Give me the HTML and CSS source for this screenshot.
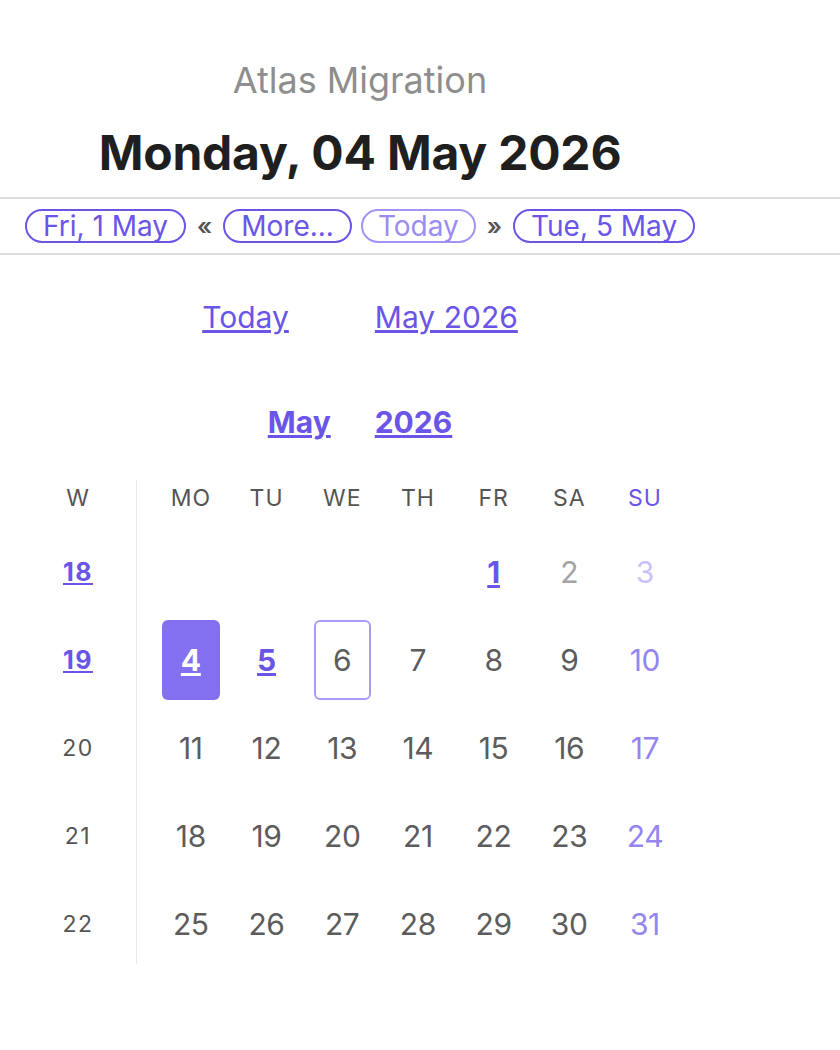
FILE: index.html
```html
<!DOCTYPE html>
<html lang="en">
<head>
<meta charset="utf-8">
<title>Atlas Migration</title>
<link rel="stylesheet" href="styles.css">
</head>
<body>
<header class="head">
  <div class="project">Atlas Migration</div>
  <h1 class="date">Monday, 04 May 2026</h1>
</header>
<nav class="daynav">
  <a class="pill" href="#">Fri, 1 May</a>
  <span class="arrow">«</span>
  <a class="pill" href="#">More...</a>
  <a class="pill pill-muted" href="#">Today</a>
  <span class="arrow">»</span>
  <a class="pill" href="#">Tue, 5 May</a>
</nav>
<div class="quick">
  <a href="#">Today</a>
  <a href="#">May 2026</a>
</div>
<div class="monthhead">
  <a href="#">May</a>
  <a href="#">2026</a>
</div>
<div class="cal">
  <div class="weeks">
    <div class="hcell">W</div>
    <div class="wk"><a href="#">18</a></div>
    <div class="wk"><a href="#">19</a></div>
    <div class="wk">20</div>
    <div class="wk">21</div>
    <div class="wk">22</div>
  </div>
  <div class="days">
    <div class="hcell">MO</div>
    <div class="hcell">TU</div>
    <div class="hcell">WE</div>
    <div class="hcell">TH</div>
    <div class="hcell">FR</div>
    <div class="hcell">SA</div>
    <div class="hcell sun">SU</div>

    <div class="d"></div>
    <div class="d"></div>
    <div class="d"></div>
    <div class="d"></div>
    <div class="d"><a class="link" href="#">1</a></div>
    <div class="d past">2</div>
    <div class="d pastsun">3</div>

    <div class="d"><a class="sel" href="#">4</a></div>
    <div class="d"><a class="link" href="#">5</a></div>
    <div class="d"><span class="today">6</span></div>
    <div class="d">7</div>
    <div class="d">8</div>
    <div class="d">9</div>
    <div class="d sunday">10</div>

    <div class="d">11</div>
    <div class="d">12</div>
    <div class="d">13</div>
    <div class="d">14</div>
    <div class="d">15</div>
    <div class="d">16</div>
    <div class="d sunday">17</div>

    <div class="d">18</div>
    <div class="d">19</div>
    <div class="d">20</div>
    <div class="d">21</div>
    <div class="d">22</div>
    <div class="d">23</div>
    <div class="d sunday">24</div>

    <div class="d">25</div>
    <div class="d">26</div>
    <div class="d">27</div>
    <div class="d">28</div>
    <div class="d">29</div>
    <div class="d">30</div>
    <div class="d sunday">31</div>
  </div>
</div>
</body>
</html>
```
FILE: styles.css
```css
* { box-sizing: border-box; }
html, body { margin: 0; padding: 0; background: #fff; }
body {
  font-family: Inter, "Noto Sans", "Liberation Sans", sans-serif;
  color: #5c5c5c;
  width: 840px;
}
a { color: #6a55e8; }

.head {
  width: 720px;
  text-align: center;
  padding-top: 60px;
}
.project {
  font-size: 36px;
  line-height: 40px;
  color: #8e8e8e;
}
.date {
  margin: 25px 0 0;
  font-size: 48px;
  line-height: 56px;
  font-weight: 700;
  color: #1f1f1f;
  letter-spacing: -0.2px;
  padding-bottom: 16px;
}

.daynav {
  border-top: 2px solid #dcdcdc;
  border-bottom: 2px solid #dcdcdc;
  padding: 10px 25px;
  display: flex;
  align-items: center;
  gap: 9px;
}
.pill {
  display: inline-block;
  height: 34px;
  line-height: 30px;
  padding: 0 16px;
  border: 2px solid #6a55e8;
  border-radius: 17px;
  font-size: 28px;
  color: #6a55e8;
  text-decoration: none;
}
.pill-muted {
  color: #9b8cf2;
  border-color: #a293f4;
  padding: 0 15px;
}
.arrow {
  font-size: 24px;
  font-weight: 600;
  color: #555;
  padding: 0 2px;
}

.quick {
  width: 720px;
  margin-top: 44px;
  display: flex;
  justify-content: center;
  gap: 86px;
  font-size: 30px;
  line-height: 36px;
}
.monthhead {
  width: 720px;
  margin-top: 69px;
  display: flex;
  justify-content: center;
  gap: 44px;
  font-size: 30px;
  line-height: 36px;
  font-weight: 700;
}

.cal {
  margin-top: 40px;
  padding-left: 40px;
  display: flex;
}
.weeks {
  width: 97px;
  padding-right: 20px;
  border-right: 1px solid #e8e8e8;
  display: grid;
  grid-template-rows: 44px repeat(5, 80px);
  row-gap: 8px;
}
.days {
  margin-left: 16px;
  display: grid;
  grid-template-columns: repeat(7, 75.7px);
  grid-template-rows: 44px repeat(5, 80px);
  row-gap: 8px;
}
.hcell {
  text-align: center;
  font-size: 23px;
  line-height: 36px;
  letter-spacing: 1px;
  color: #555;
}
.hcell.sun { color: #6a55e8; }
.wk {
  display: flex;
  align-items: center;
  justify-content: center;
  font-size: 23px;
  letter-spacing: 1.5px;
  color: #555;
}
.wk a { font-weight: 700; font-size: 25px; }
.d {
  display: flex;
  align-items: center;
  justify-content: center;
  font-size: 30px;
  letter-spacing: -0.3px;
  color: #5c5c5c;
}
.d .link { font-weight: 700; }
.d.past { color: #a3a3a3; }
.d.pastsun { color: #c9c1f8; }
.d.sunday { color: #9485f1; }
.sel {
  width: 58px;
  height: 80px;
  border-radius: 6px;
  background: #8370f1;
  color: #fff;
  font-weight: 700;
  display: flex;
  align-items: center;
  justify-content: center;
}
.today {
  width: 57px;
  height: 80px;
  border-radius: 6px;
  border: 2px solid #a89cf6;
  display: flex;
  align-items: center;
  justify-content: center;
}
```
